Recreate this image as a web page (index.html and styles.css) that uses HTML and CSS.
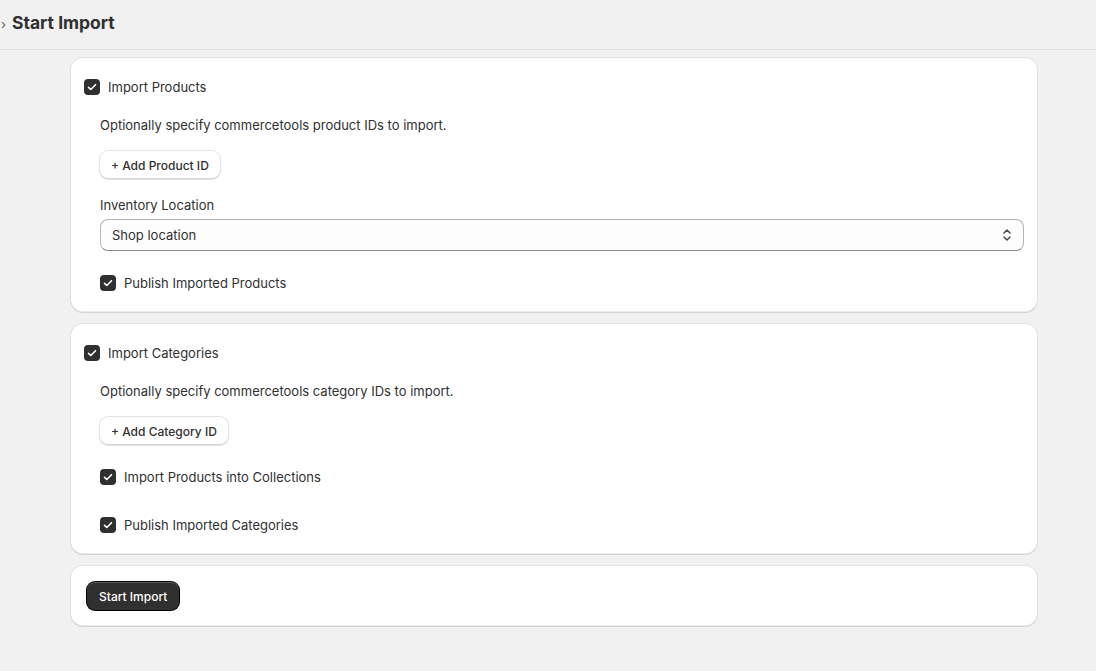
FILE: index.html
```html
<!DOCTYPE html>
<html lang="en">
<head>
    <meta charset="UTF-8">
    <meta name="viewport" content="width=device-width, initial-scale=1.0">
    <title>Start Import</title>
    <link rel="stylesheet" href="styles.css">
</head>
<body>

    <header class="topbar">
        <span class="crumb">&rsaquo;</span>
        <h1>Start Import</h1>
    </header>

    <main class="page">

        <section class="card">
            <label class="check-row">
                <span class="box"><svg viewBox="0 0 16 16"><path d="M4.5 8.3l2.3 2.2 4.7-4.8"/></svg></span>
                Import Products
            </label>
            <div class="indent">
                <p class="desc">Optionally specify commercetools product IDs to import.</p>
                <button class="btn-secondary">+ Add Product ID</button>
                <div class="field-label">Inventory Location</div>
                <div class="select">
                    <span>Shop location</span>
                    <svg viewBox="0 0 20 20"><path d="M7 8l3-3 3 3M7 12l3 3 3-3"/></svg>
                </div>
                <label class="check-row gap-lg">
                    <span class="box"><svg viewBox="0 0 16 16"><path d="M4.5 8.3l2.3 2.2 4.7-4.8"/></svg></span>
                    Publish Imported Products
                </label>
            </div>
        </section>

        <section class="card">
            <label class="check-row">
                <span class="box"><svg viewBox="0 0 16 16"><path d="M4.5 8.3l2.3 2.2 4.7-4.8"/></svg></span>
                Import Categories
            </label>
            <div class="indent">
                <p class="desc">Optionally specify commercetools category IDs to import.</p>
                <button class="btn-secondary">+ Add Category ID</button>
                <label class="check-row gap-lg">
                    <span class="box"><svg viewBox="0 0 16 16"><path d="M4.5 8.3l2.3 2.2 4.7-4.8"/></svg></span>
                    Import Products into Collections
                </label>
                <label class="check-row gap-xl">
                    <span class="box"><svg viewBox="0 0 16 16"><path d="M4.5 8.3l2.3 2.2 4.7-4.8"/></svg></span>
                    Publish Imported Categories
                </label>
            </div>
        </section>

        <section class="card card-actions">
            <button class="btn-primary">Start Import</button>
        </section>

    </main>

</body>
</html>
```

FILE: styles.css
```css
body {
    background-color: #f1f1f1;
    color: #303030;
    margin: 0;
    padding: 0;
    font-family: Inter, "Noto Sans", sans-serif;
    font-size: 13px;
}

.topbar {
    display: flex;
    align-items: center;
    height: 49px;
    border-bottom: 1px solid #e3e3e3;
    padding-left: 1px;
}

.crumb {
    color: #616161;
    font-size: 13px;
    width: 11px;
    margin-top: -1px;
}

.topbar h1 {
    margin: 0;
    font-size: 17.5px;
    font-weight: 650;
    margin-top: -4px;
}

.page {
    display: flex;
    flex-direction: column;
    gap: 12px;
    padding: 8px 59px 40px 71px;
}

.card {
    background-color: white;
    border-radius: 12px;
    padding: 16px 13px;
    box-shadow: 0 1px 0 0 rgba(26, 26, 26, 0.07), 0 0 0 1px rgba(0, 0, 0, 0.06), inset 0 -1px 0 0 rgba(0, 0, 0, 0.08);
}

.card-actions {
    padding: 16px;
}

.check-row {
    display: flex;
    align-items: center;
    gap: 8px;
    height: 26px;
    font-size: 13px;
}

.box {
    width: 16px;
    height: 16px;
    border-radius: 4px;
    background-color: #303030;
    display: flex;
}

.box svg {
    width: 16px;
    height: 16px;
    fill: none;
    stroke: white;
    stroke-width: 1.6;
    stroke-linecap: round;
    stroke-linejoin: round;
}

.indent {
    display: flex;
    flex-direction: column;
    align-items: flex-start;
    padding-left: 16px;
}

.desc {
    margin: 15px 0 0;
    line-height: 20px;
}

.btn-secondary {
    margin-top: 16px;
    height: 28px;
    padding: 0 11px;
    background-color: white;
    border: none;
    border-radius: 8px;
    box-shadow: 0 0 0 1px #e3e3e3, inset 0 -1px 0 0 #d4d4d4;
    color: #303030;
    font-family: inherit;
    font-size: 12px;
    font-weight: 550;
    cursor: pointer;
}

.field-label {
    margin-top: 16px;
    line-height: 20px;
}

.select {
    margin-top: 4px;
    align-self: stretch;
    height: 32px;
    box-sizing: border-box;
    border: 1px solid #b5b5b5;
    border-bottom-color: #8a8a8a;
    border-radius: 8px;
    background-color: #fdfdfd;
    display: flex;
    align-items: center;
    justify-content: space-between;
    padding: 0 6px 0 11px;
}

.select svg {
    width: 20px;
    height: 20px;
    fill: none;
    stroke: #4a4a4a;
    stroke-width: 1.5;
    stroke-linecap: round;
    stroke-linejoin: round;
}

.gap-lg {
    margin-top: 19px;
}

.gap-xl {
    margin-top: 22px;
}

.btn-primary {
    align-self: flex-start;
    height: 28px;
    padding: 0 12px;
    background-color: #303030;
    color: white;
    border: none;
    border-radius: 8px;
    box-shadow: 0 0 0 1px #000, inset 0 1px 0 0 rgba(255, 255, 255, 0.2);
    font-family: inherit;
    font-size: 12px;
    font-weight: 550;
    cursor: pointer;
}
```
